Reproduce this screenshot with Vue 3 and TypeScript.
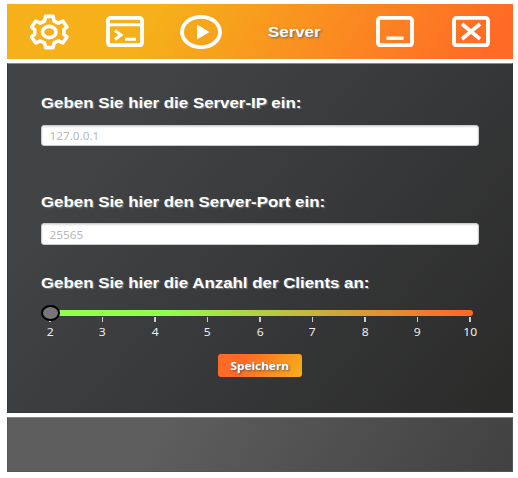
<script setup lang="ts">
import { ref } from 'vue'

const ip = ref<string>('')
const port = ref<string>('')
const clients: number[] = [2, 3, 4, 5, 6, 7, 8, 9, 10]
</script>

<template>
  <div class="window">
    <header class="bar">
      <svg class="gear" viewBox="0 0 42 36">
        <path d="M17.5 2.4h7.6l1 4.8 4.2 2 4.5-2.2 4.2 6-3.1 2.6v4.8l3.1 2.6-4.2 6-4.5-2.2-4.2 2-1 4.8h-7.6l-1-4.8-4.2-2-4.5 2.2-4.2-6 3.1-2.6v-4.8l-3.1-2.6 4.2-6 4.5 2.2 4.2-2z" />
        <ellipse cx="21.3" cy="18" rx="6.8" ry="5.6" />
      </svg>
      <svg class="box" viewBox="0 0 38 31">
        <rect x="2" y="1.9" width="34" height="27.4" rx="2.5" />
        <path d="M2 8.7h34M9 14.5l6 4.5-6 4.5M19 23.2h11" />
      </svg>
      <svg class="play" viewBox="0 0 42 34">
        <ellipse cx="21" cy="17" rx="19" ry="15.1" />
        <path class="solid" d="M17 9.5l12.5 7.5L17 24.5z" />
      </svg>
      <h1><span class="wide">Server</span></h1>
      <svg class="box" viewBox="0 0 38 31">
        <rect x="2" y="1.9" width="34" height="27.4" rx="2.5" />
        <path class="dash" d="M10.5 22.2h17" />
      </svg>
      <svg class="box" viewBox="0 0 38 31">
        <rect x="2" y="1.9" width="34" height="27.4" rx="2.5" />
        <path class="cross" d="M10 8l18 15M28 8l-18 15" />
      </svg>
    </header>

    <main class="panel">
      <label class="first"><span class="wide">Geben Sie hier die Server-IP ein:</span></label>
      <div class="field short"><input v-model="ip" placeholder="127.0.0.1" /></div>
      <label class="second"><span class="wide">Geben Sie hier den Server-Port ein:</span></label>
      <div class="field"><input v-model="port" placeholder="25565" /></div>
      <label class="third"><span class="wide">Geben Sie hier die Anzahl der Clients an:</span></label>
      <div class="slider">
        <div class="track"></div>
        <div class="thumb"></div>
      </div>
      <div class="ticks">
        <div v-for="n in clients" :key="n" class="tick"><i></i><span>{{ n }}</span></div>
      </div>
      <button type="button"><span>Speichern</span></button>
    </main>

    <footer class="status"></footer>
  </div>
</template>

<style>
body { background: #fff; }
</style>

<style scoped>
.window {
  box-sizing: border-box;
  width: 518px;
  height: 478px;
  padding: 4px 5px 6px 7px;
  display: flex;
  flex-direction: column;
  font-family: "Liberation Sans", Arial, sans-serif;
}
.bar {
  box-sizing: border-box;
  height: 55px;
  padding-left: 21px;
  display: flex;
  align-items: center;
  background: linear-gradient(120deg, #f5b01a 29%, #ff6a26 95%);
}
svg { display: block; flex: none; fill: none; stroke: #fff; stroke-width: 3.9; }
.gear { width: 42px; height: 36px; stroke-width: 3.6; stroke-linejoin: round; }
.box { width: 38px; height: 31px; }
.box path { stroke-width: 3; }
.box .dash { stroke-width: 3.4; }
.box .cross { stroke-width: 3.6; }
.play { width: 42px; height: 34px; margin-left: 36px; }
.gear + .box { margin-left: 36px; }
.play .solid { fill: #fff; stroke: none; }
h1 { margin: 0 0 0 46px; width: 52px; font-size: 14px; line-height: 18px; color: #fff; text-shadow: 1px 1px 2px #666; }
h1 + .box { margin-left: 56px; }
.box + .box { margin-left: 38px; }
.wide { display: inline-block; white-space: nowrap; transform: scaleX(1.205); transform-origin: left; }
.panel {
  box-sizing: border-box;
  height: 350px;
  margin-top: 4px;
  padding: 30px 33px 0;
  border: 1px solid #343536;
  border-top-color: #8a8a8a;
  display: flex;
  flex-direction: column;
  background: linear-gradient(130deg, #424345 20%, #393a3c 50%, #2b2b2a 97%);
}
label { height: 18px; font-size: 14px; line-height: 18px; font-weight: bold; color: #fff; text-shadow: 1px 1px 1px #777; }
.second { margin-top: 47px; }
.third { margin-top: 29px; }
.field {
  box-sizing: border-box;
  width: 438px;
  height: 22px;
  flex: none;
  margin-top: 12px;
  border: 1px solid #c8cccc;
  border-radius: 3px;
  background: #fff;
  box-shadow: inset 0 1px 2px #ddd;
  display: flex;
}
.short { height: 21px; margin-top: 13px; }
input {
  width: 340px;
  margin: 0;
  padding: 0 0 0 7px;
  border: 0;
  outline: 0;
  background: transparent;
  font: 11px "Noto Sans", sans-serif;
  transform: scaleX(1.07);
  transform-origin: left;
}
input::placeholder { color: #b8b8b8; opacity: 1; }
.slider { display: grid; align-items: center; height: 16px; margin-top: 13px; }
.track, .thumb { grid-area: 1 / 1; }
.track { width: 428px; height: 6px; margin-left: 4px; border-radius: 3px; background: linear-gradient(90deg, #8fff50 28%, #ff6a26 97%); }
.thumb { box-sizing: border-box; z-index: 1; width: 19px; height: 16px; border: 2px solid #000; border-radius: 50%; background: #777; }
.ticks { display: flex; justify-content: space-between; width: 440px; margin: -4px 0 0 -1px; }
.tick { width: 20px; display: flex; flex-direction: column; align-items: center; font: 11px/15px "Noto Sans", sans-serif; color: #eee; }
.tick i { width: 1.5px; height: 5px; margin-bottom: 2px; background: #ccc; }
.tick span { transform: scaleX(1.1); }
button {
  width: 84px;
  height: 23px;
  margin: 15px auto 0;
  padding: 0;
  border: 0;
  border-radius: 3px;
  background: linear-gradient(120deg, #ff6a26 30%, #f5b01a 100%);
  font: bold 10px "Noto Sans", sans-serif;
  color: #fff;
  text-shadow: 1px 1px 2px #555;
}
button span { display: inline-block; transform: scaleX(1.18); }
.status {
  box-sizing: border-box;
  height: 55px;
  margin-top: 4px;
  border: 1px solid #555;
  border-top-color: #888;
  background: linear-gradient(120deg, #5e5e5e 29%, #424242 97%);
}
</style>
